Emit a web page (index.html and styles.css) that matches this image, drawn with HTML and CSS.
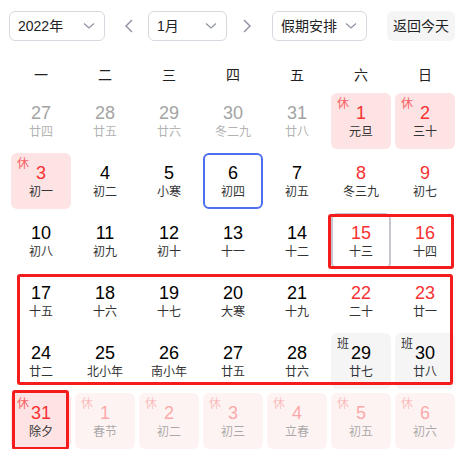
FILE: index.html
```html
<!DOCTYPE html>
<html lang="zh">
<head>
<meta charset="utf-8">
<title>万年历</title>
<link rel="stylesheet" href="styles.css">
</head>
<body>
<div class="cal">
  <div class="toolbar">
    <div class="select sel-year"><span>2022年</span><svg class="chev" viewBox="0 0 12 8"><polyline points="1,1.5 6,6 11,1.5"/></svg></div>
    <div class="arrow arrow-prev"><svg viewBox="0 0 8 14"><polyline points="7,1 1,7 7,13"/></svg></div>
    <div class="select sel-month"><span>1月</span><svg class="chev" viewBox="0 0 12 8"><polyline points="1,1.5 6,6 11,1.5"/></svg></div>
    <div class="arrow arrow-next"><svg viewBox="0 0 8 14"><polyline points="1,1 7,7 1,13"/></svg></div>
    <div class="select sel-hol"><span>假期安排</span><svg class="chev" viewBox="0 0 12 8"><polyline points="1,1.5 6,6 11,1.5"/></svg></div>
    <div class="today-btn">返回今天</div>
  </div>

  <div class="weekdays">
    <div>一</div><div>二</div><div>三</div><div>四</div><div>五</div><div>六</div><div>日</div>
  </div>

  <div class="days">
    <div class="day prev"><div class="num">27</div><div class="lunar">廿四</div></div>
    <div class="day prev"><div class="num">28</div><div class="lunar">廿五</div></div>
    <div class="day prev"><div class="num">29</div><div class="lunar">廿六</div></div>
    <div class="day prev"><div class="num">30</div><div class="lunar">冬二九</div></div>
    <div class="day prev"><div class="num">31</div><div class="lunar">廿八</div></div>
    <div class="day rest red"><span class="tag">休</span><div class="num">1</div><div class="lunar">元旦</div></div>
    <div class="day rest red"><span class="tag">休</span><div class="num">2</div><div class="lunar">三十</div></div>

    <div class="day rest red"><span class="tag">休</span><div class="num">3</div><div class="lunar">初一</div></div>
    <div class="day"><div class="num">4</div><div class="lunar">初二</div></div>
    <div class="day"><div class="num">5</div><div class="lunar">小寒</div></div>
    <div class="day today"><div class="num">6</div><div class="lunar">初四</div></div>
    <div class="day"><div class="num">7</div><div class="lunar">初五</div></div>
    <div class="day red"><div class="num">8</div><div class="lunar">冬三九</div></div>
    <div class="day red"><div class="num">9</div><div class="lunar">初七</div></div>

    <div class="day"><div class="num">10</div><div class="lunar">初八</div></div>
    <div class="day"><div class="num">11</div><div class="lunar">初九</div></div>
    <div class="day"><div class="num">12</div><div class="lunar">初十</div></div>
    <div class="day"><div class="num">13</div><div class="lunar">十一</div></div>
    <div class="day"><div class="num">14</div><div class="lunar">十二</div></div>
    <div class="day red selected"><div class="num">15</div><div class="lunar">十三</div></div>
    <div class="day red"><div class="num">16</div><div class="lunar">十四</div></div>

    <div class="day"><div class="num">17</div><div class="lunar">十五</div></div>
    <div class="day"><div class="num">18</div><div class="lunar">十六</div></div>
    <div class="day"><div class="num">19</div><div class="lunar">十七</div></div>
    <div class="day"><div class="num">20</div><div class="lunar">大寒</div></div>
    <div class="day"><div class="num">21</div><div class="lunar">十九</div></div>
    <div class="day red"><div class="num">22</div><div class="lunar">二十</div></div>
    <div class="day red"><div class="num">23</div><div class="lunar">廿一</div></div>

    <div class="day"><div class="num">24</div><div class="lunar">廿二</div></div>
    <div class="day"><div class="num">25</div><div class="lunar">北小年</div></div>
    <div class="day"><div class="num">26</div><div class="lunar">南小年</div></div>
    <div class="day"><div class="num">27</div><div class="lunar">廿五</div></div>
    <div class="day"><div class="num">28</div><div class="lunar">廿六</div></div>
    <div class="day work"><span class="tag">班</span><div class="num">29</div><div class="lunar">廿七</div></div>
    <div class="day work"><span class="tag">班</span><div class="num">30</div><div class="lunar">廿八</div></div>

    <div class="day rest red"><span class="tag">休</span><div class="num">31</div><div class="lunar">除夕</div></div>
    <div class="day rest red next"><span class="tag">休</span><div class="num">1</div><div class="lunar">春节</div></div>
    <div class="day rest red next"><span class="tag">休</span><div class="num">2</div><div class="lunar">初二</div></div>
    <div class="day rest red next"><span class="tag">休</span><div class="num">3</div><div class="lunar">初三</div></div>
    <div class="day rest red next"><span class="tag">休</span><div class="num">4</div><div class="lunar">立春</div></div>
    <div class="day rest red next"><span class="tag">休</span><div class="num">5</div><div class="lunar">初五</div></div>
    <div class="day rest red next"><span class="tag">休</span><div class="num">6</div><div class="lunar">初六</div></div>

    <div class="mark mark-a"></div>
    <div class="mark mark-b"></div>
    <div class="mark mark-c"></div>
  </div>
</div>
</body>
</html>
```

FILE: styles.css
```css
html, body {
  margin: 0;
  padding: 0;
  background: #fff;
}

body {
  font-family: "Liberation Sans", Arial, "Noto Sans CJK SC", sans-serif;
  color: #222;
}

.cal {
  width: 467px;
}

.toolbar {
  display: flex;
  align-items: center;
  height: 30px;
  margin-top: 11px;
  padding-left: 9px;
}

.select {
  box-sizing: border-box;
  height: 30px;
  border: 1px solid #d7d9e0;
  border-radius: 6px;
  display: flex;
  align-items: center;
  justify-content: space-between;
  padding: 0 9px 0 8px;
  font-size: 14px;
  line-height: 20px;
  color: #222;
}

.sel-year { width: 96px; }
.sel-month { width: 79px; }
.sel-hol { width: 95px; }

.chev {
  width: 12px;
  height: 8px;
  fill: none;
  stroke: #9195a3;
  stroke-width: 1.3;
}

.arrow {
  display: flex;
  align-items: center;
  height: 30px;
}

.arrow svg {
  width: 8px;
  height: 14px;
  fill: none;
  stroke: #9195a3;
  stroke-width: 1.5;
}

.arrow-prev { margin: 0 15px 0 20px; }
.arrow-next { margin: 0 21px 0 16px; }

.today-btn {
  box-sizing: border-box;
  width: 68px;
  height: 30px;
  margin-left: 20px;
  border-radius: 6px;
  background: #f5f5f6;
  font-size: 14px;
  line-height: 30px;
  text-align: center;
  color: #222;
}

.weekdays {
  display: grid;
  grid-template-columns: repeat(7, 60px);
  column-gap: 4px;
  padding-left: 11px;
  margin-top: 24px;
  height: 20px;
  font-size: 14px;
  line-height: 20px;
  text-align: center;
  color: #222;
}

.days {
  position: relative;
  display: grid;
  grid-template-columns: repeat(7, 60px);
  grid-auto-rows: 56px;
  gap: 4px;
  margin-left: 11px;
  margin-top: 8px;
  width: 444px;
}

.day {
  position: relative;
  box-sizing: border-box;
  border-radius: 6px;
  text-align: center;
  padding-top: 10px;
}

.num {
  font-size: 18px;
  line-height: 20px;
  color: #000;
}

.lunar {
  font-size: 12px;
  line-height: 18px;
  color: #333;
}

.red .num { color: #f73131; }

.prev .num { color: #a3a3a3; }
.prev .lunar { color: #b3b3b3; }

.rest { background: #fde3e4; }
.work { background: #f5f5f6; }

.tag {
  position: absolute;
  left: 6px;
  top: 3px;
  font-size: 12px;
  line-height: 16px;
}

.rest .tag { color: #f86262; }
.work .tag { color: #333; }

.today {
  border: 2px solid #4e6ef2;
  padding-top: 8px;
}

.selected {
  border: 2px solid #c4c7ce;
  padding-top: 8px;
}

.next { opacity: 0.42; }

.mark {
  position: absolute;
  box-sizing: border-box;
  border: 3px solid #f41c1c;
  border-radius: 3px;
}

.mark-a { left: 317px; top: 121px; width: 126px; height: 55px; }
.mark-b { left: 6px; top: 181px; width: 436px; height: 111px; }
.mark-c { left: 1px; top: 297px; width: 57px; height: 60px; }
```
